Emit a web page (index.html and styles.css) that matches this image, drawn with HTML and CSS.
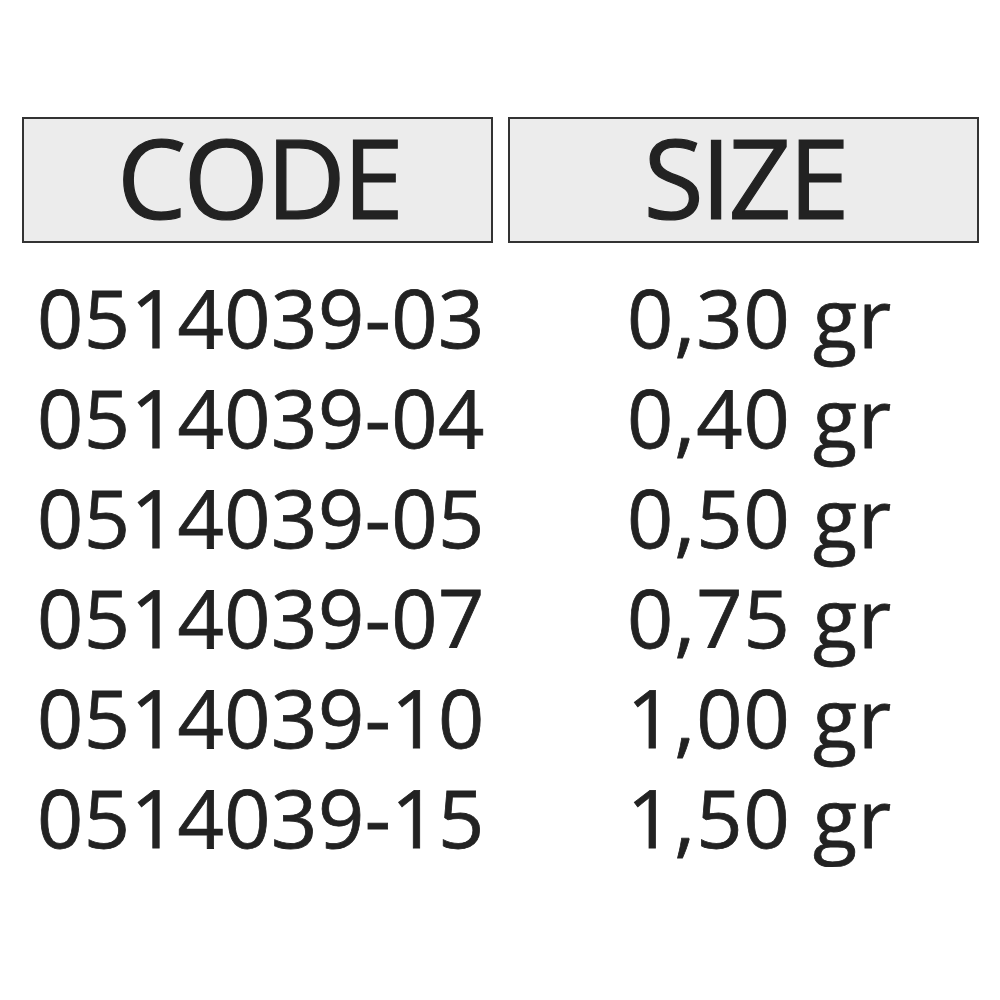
FILE: index.html
```html
<!DOCTYPE html>
<html>
<head>
<meta charset="utf-8">
<link rel="stylesheet" href="styles.css">
</head>
<body>
<div class="table">
  <div class="head">CODE</div>
  <div class="head">SIZE</div>
  <div class="rows">
    <div class="row"><span class="code">0514039-03</span><span class="size">0,30 gr</span></div>
    <div class="row"><span class="code">0514039-04</span><span class="size">0,40 gr</span></div>
    <div class="row"><span class="code">0514039-05</span><span class="size">0,50 gr</span></div>
    <div class="row"><span class="code">0514039-07</span><span class="size">0,75 gr</span></div>
    <div class="row"><span class="code">0514039-10</span><span class="size">1,00 gr</span></div>
    <div class="row"><span class="code">0514039-15</span><span class="size">1,50 gr</span></div>
  </div>
</div>
</body>
</html>
```
FILE: styles.css
```css
html, body {
  margin: 0;
  padding: 0;
  background: #ffffff;
}
body {
  font-family: "Open Sans", "Noto Sans", sans-serif;
  color: #222222;
  -webkit-text-stroke: 0.8px #222222;
}
.table {
  display: grid;
  grid-template-columns: 471px 471px;
  column-gap: 15px;
  padding: 117px 0 0 22px;
}
.head {
  box-sizing: border-box;
  height: 126px;
  border: 2px solid #333333;
  background: #ececec;
  text-align: center;
  font-size: 110px;
  line-height: 115px;
  padding: 0 0 7px 3px;
  letter-spacing: -3px;
  -webkit-text-stroke: 1.2px #222222;
}
.rows {
  grid-column: 1 / span 2;
  padding-top: 24px;
}
.row {
  display: grid;
  grid-template-columns: 605px auto;
  font-size: 81px;
  line-height: 100px;
  letter-spacing: 0.5px;
  white-space: nowrap;
}
.code {
  padding-left: 15px;
}
.size {
  letter-spacing: 1px;
}
```
